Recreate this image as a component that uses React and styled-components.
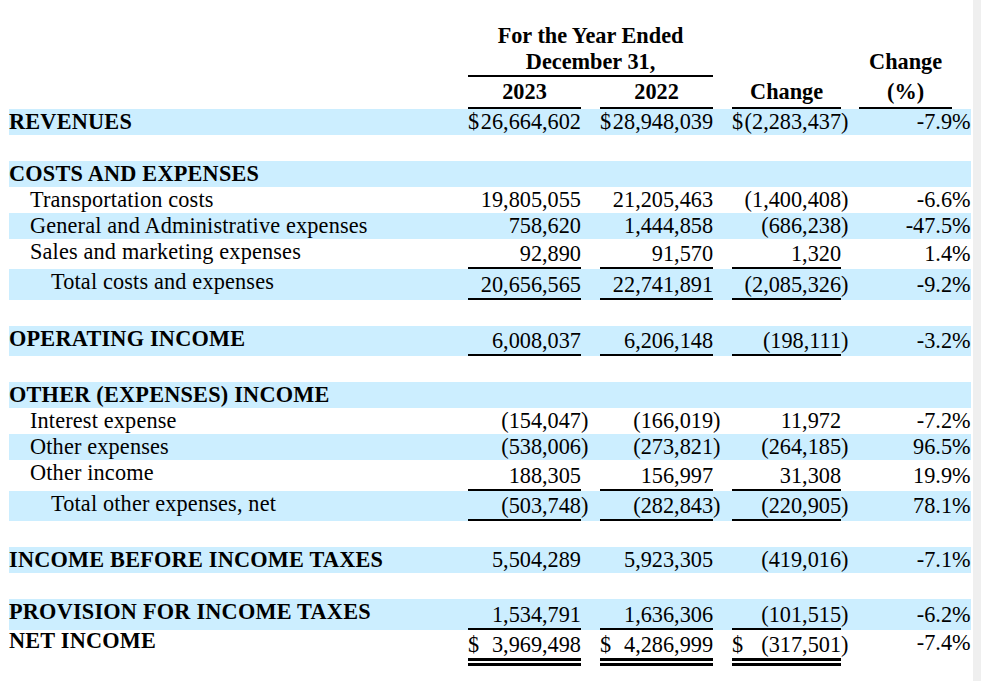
import React from "react";
import styled, { createGlobalStyle, css } from "styled-components";

const Global = createGlobalStyle`
  html, body { margin: 0; padding: 0; background: #ffffff; }
  #root { min-height: 100vh; }
`;

const BLUE = "#cceeff";
const RULE = "2px solid #000";
const DOUBLE = "8px double #000";

const Page = styled.div`
  display: flex;
  min-height: 100vh;
  background: #ffffff;
`;

const Sheet = styled.div`
  width: 973px;
  box-sizing: border-box;
  padding: 23.3px 2px 0 9px;
`;

const Edge = styled.div`
  width: 8px;
  background: #efefef;
`;

const Table = styled.table`
  width: 962px;
  table-layout: fixed;
  border-collapse: separate;
  border-spacing: 0;
  font-family: "Liberation Serif", "Times New Roman", serif;
  font-size: 22.27px;
  line-height: 26px;
  color: #000;
`;

const Row = styled.tr`
  background: ${(p) => (p.$shade ? BLUE : "transparent")};
`;

const Spacer = styled.tr`
  height: 26px;
`;

const HeadCell = styled.th`
  padding: ${(p) => (p.$lower ? "1.5px 0 2px" : p.$lift ? "0 0 2px" : "0")};
  font-weight: 700;
  text-align: center;
  vertical-align: bottom;
  white-space: nowrap;
  border-bottom: ${(p) => (p.$rule ? RULE : "none")};
`;

const Label = styled.td`
  padding: 0 0 0 ${(p) => p.$indent * 21}px;
  font-weight: ${(p) => (p.$bold ? 700 : 400)};
  letter-spacing: ${(p) => (p.$bold ? "0.22px" : "0.16px")};
  text-align: left;
  vertical-align: top;
  white-space: nowrap;
  ${(p) =>
    p.$tight &&
    css`
      line-height: 22px;
    `}
`;

const valueCell = css`
  padding: ${(p) => (p.$pad ? `${p.$pad}px` : "0")} 0 0;
  vertical-align: top;
  white-space: nowrap;
  overflow: visible;
  border-bottom: ${(p) =>
    p.$rule === "double" ? DOUBLE : p.$rule === "single" ? RULE : "none"};
`;

const Dollar = styled.td`
  ${valueCell}
  text-align: left;
`;

const Amount = styled.td`
  ${valueCell}
  text-align: right;
`;

const Paren = styled.td`
  padding: ${(p) => (p.$pad ? `${p.$pad}px` : "0")} 0 0;
  text-align: left;
  vertical-align: top;
  white-space: nowrap;
`;

const Pct = styled.td`
  padding: ${(p) => (p.$pad ? `${p.$pad}px` : "0")} 0 0;
  text-align: right;
  vertical-align: top;
  white-space: nowrap;
`;

const PctSign = styled(Pct)`
  text-align: left;
`;

const COLS = [459, 11, 102, 19, 11, 102, 19, 11, 98, 18, 93, 19];

const rows = [
  { label: "REVENUES", bold: true, shade: true, dollar: true, vals: ["26,664,602", "28,948,039", "(2,283,437)"], pct: "-7.9" },
  { spacer: true },
  { label: "COSTS AND EXPENSES", bold: true, shade: true },
  { label: "Transportation costs", indent: 1, vals: ["19,805,055", "21,205,463", "(1,400,408)"], pct: "-6.6" },
  { label: "General and Administrative expenses", indent: 1, shade: true, vals: ["758,620", "1,444,858", "(686,238)"], pct: "-47.5" },
  { label: "Sales and marketing expenses", indent: 1, rule: "single", vals: ["92,890", "91,570", "1,320"], pct: "1.4" },
  { label: "Total costs and expenses", indent: 2, shade: true, rule: "single", vals: ["20,656,565", "22,741,891", "(2,085,326)"], pct: "-9.2" },
  { spacer: true },
  { label: "OPERATING INCOME", bold: true, shade: true, rule: "single", vals: ["6,008,037", "6,206,148", "(198,111)"], pct: "-3.2" },
  { spacer: true },
  { label: "OTHER (EXPENSES) INCOME", bold: true, shade: true },
  { label: "Interest expense", indent: 1, vals: ["(154,047)", "(166,019)", "11,972"], pct: "-7.2" },
  { label: "Other expenses", indent: 1, shade: true, vals: ["(538,006)", "(273,821)", "(264,185)"], pct: "96.5" },
  { label: "Other income", indent: 1, rule: "single", vals: ["188,305", "156,997", "31,308"], pct: "19.9" },
  { label: "Total other expenses, net", indent: 2, shade: true, rule: "single", vals: ["(503,748)", "(282,843)", "(220,905)"], pct: "78.1" },
  { spacer: true },
  { label: "INCOME BEFORE INCOME TAXES", bold: true, shade: true, vals: ["5,504,289", "5,923,305", "(419,016)"], pct: "-7.1" },
  { spacer: true },
  { label: "PROVISION FOR INCOME TAXES", bold: true, shade: true, rule: "single", vals: ["1,534,791", "1,636,306", "(101,515)"], pct: "-6.2" },
  { label: "NET INCOME", bold: true, rule: "double", dollar: true, vals: ["3,969,498", "4,286,999", "(317,501)"], pct: "-7.4" },
];

function splitParen(v) {
  return v.endsWith(")") ? [v.slice(0, -1), ")"] : [v, ""];
}

function DataRow({ row }) {
  const pad = row.rule ? 2.5 : 0;
  const pctPad = row.rule === "double" ? 0.7 : pad;
  const cells = [];
  if (row.vals) {
    row.vals.forEach((v, i) => {
      const [num, close] = splitParen(v);
      cells.push(
        <Dollar key={`d${i}`} $rule={row.rule} $pad={pad}>
          {row.dollar ? "$" : ""}
        </Dollar>,
        <Amount key={`a${i}`} $rule={row.rule} $pad={pad}>
          {num}
        </Amount>,
        <Paren key={`p${i}`} $pad={pad}>
          {close}
        </Paren>
      );
    });
    cells.push(
      <Pct key="pct" $pad={pctPad}>{row.pct}</Pct>,
      <PctSign key="sign" $pad={pctPad}>%</PctSign>
    );
  }
  return (
    <Row $shade={row.shade}>
      <Label
        colSpan={row.vals ? 1 : 12}
        $bold={row.bold}
        $indent={row.indent || 0}
        $tight={row.rule === "double"}
      >
        {row.label}
      </Label>
      {cells}
    </Row>
  );
}

export default function App() {
  return (
    <>
      <Global />
      <Page>
        <Sheet>
          <Table>
            <colgroup>
              {COLS.map((w, i) => (
                <col key={i} style={{ width: w }} />
              ))}
            </colgroup>
            <thead>
              <tr>
                <HeadCell />
                <HeadCell colSpan={5} $rule>
                  For the Year Ended
                  <br />
                  December 31,
                </HeadCell>
                <HeadCell />
                <HeadCell colSpan={2} />
                <HeadCell />
                <HeadCell $lift>Change</HeadCell>
                <HeadCell />
              </tr>
              <tr>
                <HeadCell $lower />
                <HeadCell colSpan={2} $lower $rule>
                  2023
                </HeadCell>
                <HeadCell $lower />
                <HeadCell colSpan={2} $lower $rule>
                  2022
                </HeadCell>
                <HeadCell $lower />
                <HeadCell colSpan={2} $lower $rule>
                  Change
                </HeadCell>
                <HeadCell $lower />
                <HeadCell $lower $rule>
                  (%)
                </HeadCell>
                <HeadCell $lower />
              </tr>
            </thead>
            <tbody>
              {rows.map((row, i) =>
                row.spacer ? (
                  <Spacer key={i}>
                    <td colSpan={12} />
                  </Spacer>
                ) : (
                  <DataRow key={i} row={row} />
                )
              )}
            </tbody>
          </Table>
        </Sheet>
        <Edge />
      </Page>
    </>
  );
}
